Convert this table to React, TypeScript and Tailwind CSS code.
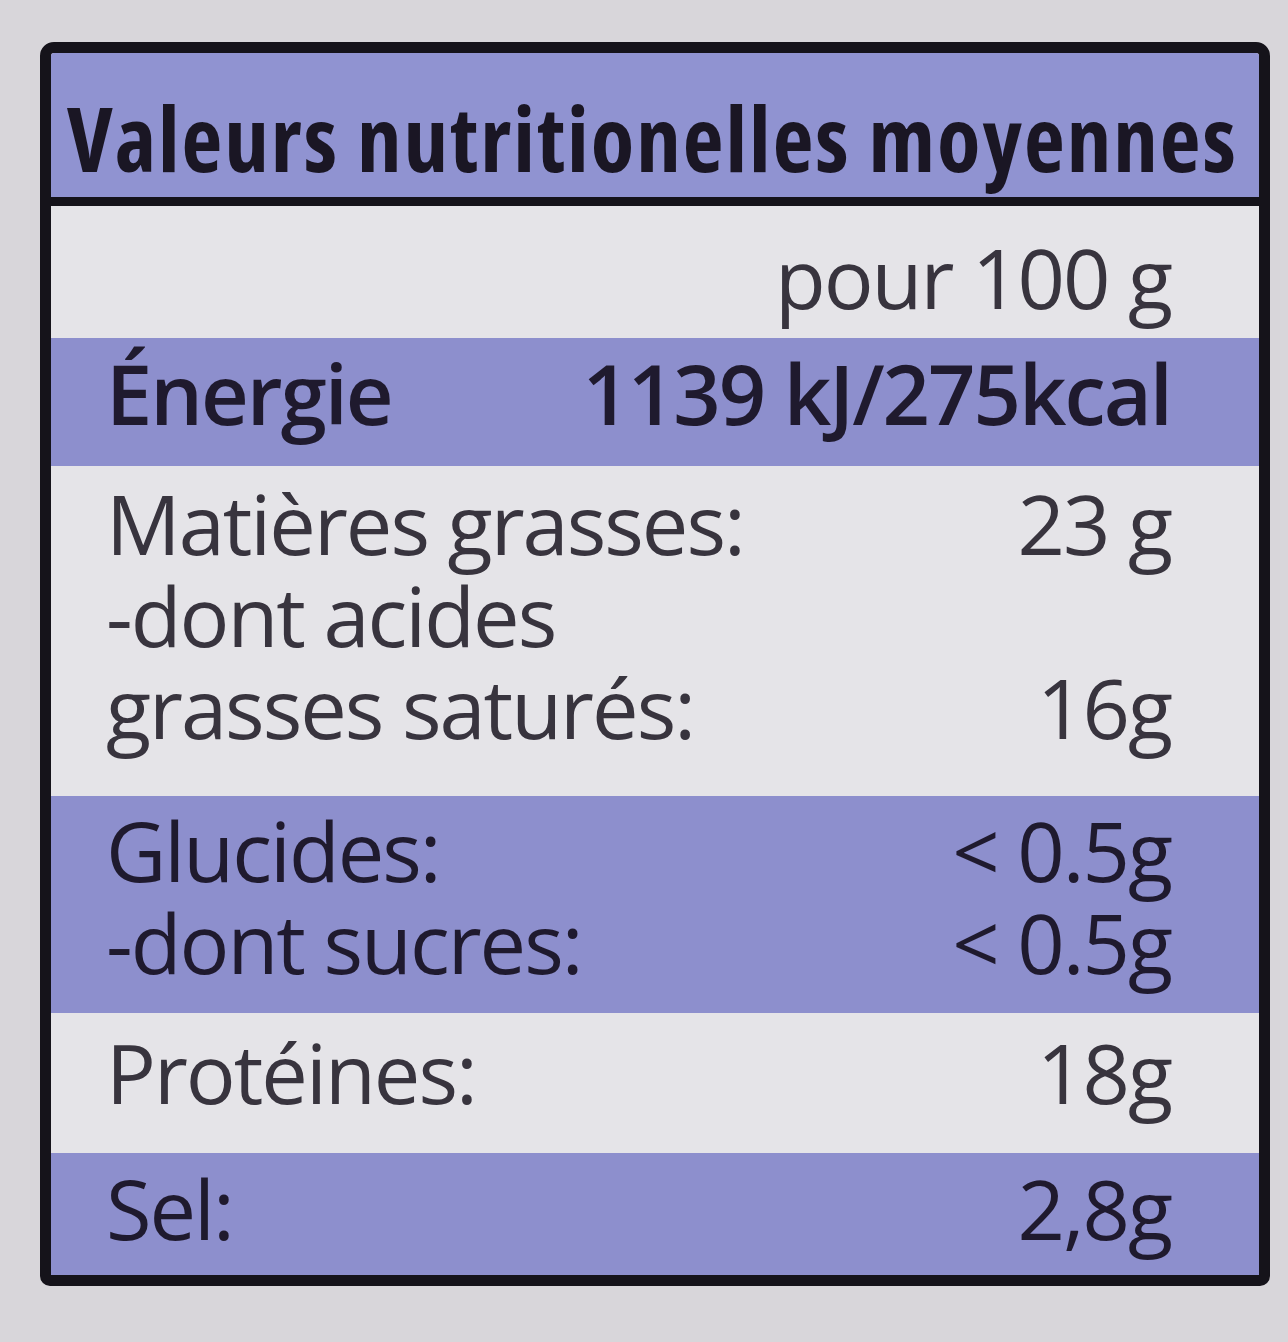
import React from "react";

type Line = { label: string; value?: string };

const Row = ({
  lines,
  blue,
  className,
  bold,
}: {
  lines: Line[];
  blue?: boolean;
  className: string;
  bold?: boolean;
}) => (
  <div
    className={
      (blue ? "bg-[#8d8fcd] text-[#1f1a2e] " : "bg-[#e5e4e8] text-[#38343e] ") +
      (bold ? "font-semibold " : "font-normal ") +
      "pl-[55px] pr-[88px] text-[83px] tracking-[-2px] " +
      className
    }
  >
    {lines.map((l, i) => (
      <div key={i} className="flex justify-between items-start h-[92px] whitespace-nowrap">
        <span className="block h-[92px] leading-[92px]">{l.label}</span>
        <span className="block h-[92px] leading-[92px]">{l.value}</span>
      </div>
    ))}
  </div>
);

const App = () => {
  return (
    <div className="w-[1288px] h-[1342px] overflow-hidden bg-[#d8d6da] font-['Open_Sans',sans-serif]">
      <div className="pt-[42px] pl-[40px]">
        <div className="w-[1230px] border-[11px] border-[#15131a] rounded-t-[14px] rounded-b-[10px] overflow-hidden">
          <div className="bg-[#9093d1] h-[153px] pt-[39px] pl-[16px] pr-[12px] border-b-[9px] border-[#15131a]">
            <h1 className="text-[89px] leading-[92px] font-bold text-[#1a1624] whitespace-nowrap font-stretch-condensed tracking-[2px]">
              Valeurs nutritionelles moyennes
            </h1>
          </div>

          <Row className="pt-[25px] pb-[15px]" lines={[{ label: "", value: "pour 100 g" }]} />
          <Row className="pt-[9px] pb-[27px]" blue bold lines={[{ label: "Énergie", value: "1139 kJ/275kcal" }]} />
          <Row
            className="pt-[11px] pb-[43px]"
            lines={[
              { label: "Matières grasses:", value: "23 g" },
              { label: "-dont acides" },
              { label: "grasses saturés:", value: "16g" },
            ]}
          />
          <Row
            className="pt-[8px] pb-[25px]"
            blue
            lines={[
              { label: "Glucides:", value: "< 0.5g" },
              { label: "-dont sucres:", value: "< 0.5g" },
            ]}
          />
          <Row className="pt-[13px] pb-[35px]" lines={[{ label: "Protéines:", value: "18g" }]} />
          <Row className="pt-[9px] pb-[21px]" blue lines={[{ label: "Sel:", value: "2,8g" }]} />
        </div>
      </div>
    </div>
  );
};

export default App;
